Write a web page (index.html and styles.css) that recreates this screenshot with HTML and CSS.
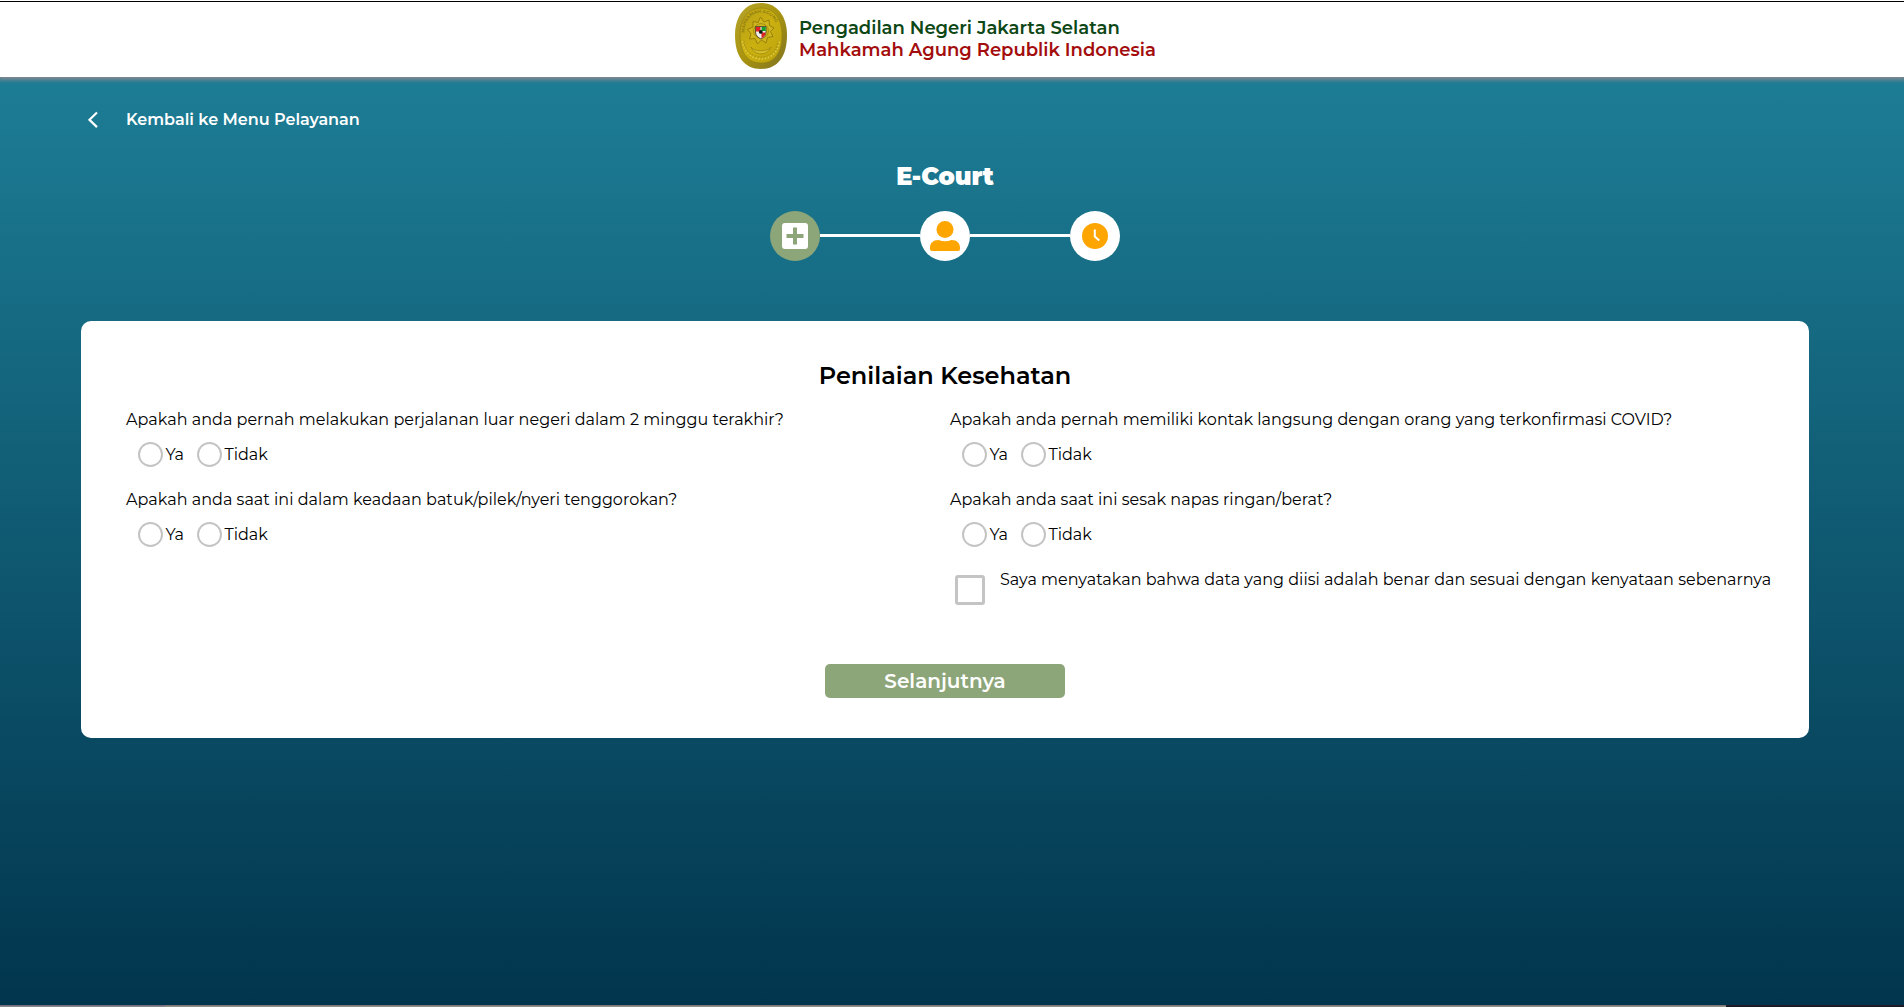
FILE: index.html
```
<!DOCTYPE html>
<html lang="id">
<head>
<meta charset="utf-8">
<title>E-Court</title>
<link rel="stylesheet" href="styles.css">
</head>
<body>
<header class="header">
  <div class="brand">
    <svg class="seal" viewBox="0 0 52 66" aria-hidden="true">
      <defs>
        <linearGradient id="rim" x1="0" y1="0" x2="1" y2="1"><stop offset="0" stop-color="#b8a52c"/><stop offset=".5" stop-color="#a8940f"/><stop offset="1" stop-color="#7f7223"/></linearGradient>
        <linearGradient id="face" x1="0" y1="0" x2="1" y2="1"><stop offset="0" stop-color="#b79f16"/><stop offset=".5" stop-color="#cbb010"/><stop offset="1" stop-color="#bba30e"/></linearGradient>
        <path id="arc" d="M9.500 30C9 3 43 3 42.500 30"/>
      </defs>
      <path d="M26 0C42 0 52 13 52 32C52 53 43 66 26 66C9 66 0 53 0 32C0 13 10 0 26 0Z" fill="url(#rim)"/>
      <path d="M26 5C39 5 47 16 47 32C47 49 40 60 26 60C12 60 5 49 5 32C5 16 13 5 26 5Z" fill="url(#face)" stroke="#978412" stroke-width=".7"/>
      <text class="seal-text"><textPath href="#arc" textLength="48">MAHKAMAH AGUNG</textPath></text>
      <path d="M25.500 14L29 19L34 17L34.500 22.500L39 25L35.500 28.500L38 33.500L32.500 34.500L31 40L26.500 37L22.500 41L20 35.500L14.500 36L16 30.500L12.500 26.500L18 24L18 18.500L23 19.500Z" fill="#d0b51b" stroke="#907c0d" stroke-width=".9"/>
      <circle cx="26" cy="28" r="7.400" fill="#d0b51b" stroke="#927f14" stroke-width=".7"/>
      <path d="M20.500 23.500H31V29C31 32.500 28.500 34.500 26 36C23 34.500 20.500 32.500 20.500 29Z" fill="#f0f0e8" stroke="#40381c" stroke-width=".8"/>
      <path d="M21 24H25.500V28.500H21Z" fill="#e22328"/><path d="M26.500 24H30.700V28H26.500Z" fill="#13a02b"/><path d="M26.500 29.500H30.600C30.500 32.500 28.500 34 26.500 35.200Z" fill="#df2027"/>
      <circle cx="25.800" cy="28.900" r="1.900" fill="#131b16"/>
      <path d="M7.500 38C10 62 42 62 44.500 38" fill="none" stroke="#e0cc4a" stroke-width="1.500" stroke-dasharray="1.500 1.700"/>
      <path d="M8.800 38C11.500 59.500 40.500 59.500 43.200 38" fill="none" stroke="#988512" stroke-width=".8" stroke-dasharray="1.500 1.700"/>
      <path d="M16 44C19 53 33 53 36 44C34 49 18 49 16 44Z" fill="#d8c02b" stroke="#907c0f" stroke-width=".6"/>
    </svg>
    <div class="brand-text">
      <div class="court">Pengadilan Negeri Jakarta Selatan</div>
      <div class="supreme">Mahkamah Agung Republik Indonesia</div>
    </div>
  </div>
</header>
<main class="page">
  <a class="back">
    <svg class="back-icon" viewBox="0 0 10 18" aria-hidden="true"><path d="M9 1.500L1.500 8.800L9 16.100" fill="none" stroke="#fff" stroke-width="2.200"/></svg>
    <span>Kembali ke Menu Pelayanan</span>
  </a>
  <h1 class="title">E-Court</h1>
  <div class="steps">
    <div class="step step-active"><svg width="26" height="26" viewBox="0 0 26 26"><rect width="26" height="26" rx="3" fill="#fff"/><path d="M11 4.500h4V11h6.500v4H15v6.500h-4V15H4.500v-4H11Z" fill="#8ca579"/></svg></div>
    <div class="line"></div>
    <div class="step"><svg width="30" height="30" viewBox="0 0 30 30" fill="#ffa500"><circle cx="15" cy="8.500" r="8.500"/><path d="M8.500 19Q15 21.500 21.500 19C27 19 30 22.500 30 26.500V28Q30 30 28 30H2Q0 30 0 28V26.500C0 22.500 3 19 8.500 19Z"/></svg></div>
    <div class="line"></div>
    <div class="step"><svg width="26" height="26" viewBox="0 0 26 26"><circle cx="13" cy="13" r="13" fill="#ffa500"/><path d="M12.800 6.500V13.500L17.300 17.500" fill="none" stroke="#fff" stroke-width="2"/></svg></div>
  </div>
  <section class="card">
    <h2 class="card-title">Penilaian Kesehatan</h2>
    <div class="columns">
      <div class="column">
        <div class="question"><p class="q">Apakah anda pernah melakukan perjalanan luar negeri dalam 2 minggu terakhir?</p>
          <div class="options"><label class="option"><i class="radio"></i><span class="yes">Ya</span></label><label class="option"><i class="radio"></i><span>Tidak</span></label></div></div>
        <div class="question"><p class="q">Apakah anda saat ini dalam keadaan batuk/pilek/nyeri tenggorokan?</p>
          <div class="options"><label class="option"><i class="radio"></i><span class="yes">Ya</span></label><label class="option"><i class="radio"></i><span>Tidak</span></label></div></div>
      </div>
      <div class="column">
        <div class="question"><p class="q">Apakah anda pernah memiliki kontak langsung dengan orang yang terkonfirmasi COVID?</p>
          <div class="options"><label class="option"><i class="radio"></i><span class="yes">Ya</span></label><label class="option"><i class="radio"></i><span>Tidak</span></label></div></div>
        <div class="question"><p class="q">Apakah anda saat ini sesak napas ringan/berat?</p>
          <div class="options"><label class="option"><i class="radio"></i><span class="yes">Ya</span></label><label class="option"><i class="radio"></i><span>Tidak</span></label></div></div>
        <label class="consent"><i class="checkbox"></i><span class="q">Saya menyatakan bahwa data yang diisi adalah benar dan sesuai dengan kenyataan sebenarnya</span></label>
      </div>
    </div>
    <button class="next">Selanjutnya</button>
  </section>
</main>
<footer class="edge"><div class="edge-left"></div><div class="edge-mid"></div><div class="edge-right"></div></footer>
</body>
</html>
```
FILE: styles.css
```
* { box-sizing: border-box; }
body {
  margin: 0;
  height: 1007px;
  overflow: hidden;
  display: flex;
  flex-direction: column;
  font: 400 16px/24px Montserrat, Inter, sans-serif;
  color: #000;
  background: linear-gradient(#1d7e96 65px, #01354d 1007px);
}
h1, h2, p { margin: 0; }
.header {
  flex: none;
  height: 77px;
  padding-right: 13px;
  display: flex;
  align-items: center;
  justify-content: center;
  background: linear-gradient(transparent 1px, #000 1px, #000 2px, transparent 2px), #fff;
  box-shadow: 0 1px 4px 2px #808890;
}
.brand { display: flex; align-items: center; gap: 12px; }
.seal { width: 52px; height: 66px; margin-top: -5px; display: block; }
.seal-text { font: 600 4.500px Montserrat, Inter, sans-serif; fill: #8c7910; }
.brand-text { font-size: 18px; line-height: 22px; font-weight: 600; white-space: nowrap; width: 357px; }
.court { color: #0d4716; }
.supreme { color: #a30d0d; }
.page {
  flex: 1;
  width: 1890px;
  padding: 31px 81px 0;
  display: flex;
  flex-direction: column;
}
.back { display: flex; align-items: center; gap: 28px; height: 24px; padding-left: 7px; color: #fff; font-weight: 600; }
.back-icon { width: 10px; height: 18px; }
.title { margin-top: 27px; color: #fff; text-align: center; font-size: 24px; line-height: 36px; font-weight: 900; }
.steps { display: flex; align-items: center; justify-content: center; margin-top: 16px; }
.step { width: 50px; height: 50px; border-radius: 50%; background: #fff; display: flex; align-items: center; justify-content: center; }
.step-active { background: #8ca579; }
.line { width: 100px; height: 3px; margin-top: -1px; background: #fff; }
.card { height: 417px; margin-top: 60px; padding: 37px 0 40px 45px; border-radius: 10px; background: #fff; display: flex; flex-direction: column; }
.card-title { margin-left: -45px; text-align: center; font-size: 24px; line-height: 36px; font-weight: 600; }
.columns { display: grid; grid-template-columns: 824px 1fr; margin-top: 14px; }
.question { height: 80px; }
.q { white-space: nowrap; letter-spacing: .022px; }
.options { display: flex; gap: 13px; margin: 10px 0 0 12px; }
.option { display: flex; gap: 2.500px; line-height: 25px; }
.radio { width: 25px; height: 25px; border: 2px solid #c4c4c4; border-radius: 50%; }
.yes { width: 18.500px; }
.consent { display: flex; gap: 15px; padding-left: 5px; }
.checkbox { width: 30px; height: 30px; margin-top: 7px; border: 3px solid #c4c4c4; border-radius: 3px; }
.next { align-self: center; width: 240px; height: 34px; margin: auto 45px 0 0; padding: 0; border: 0; border-radius: 5px; background: #8ca579; color: #fff; font: 600 20px/34px Montserrat, Inter, sans-serif; }
.edge { flex: none; height: 2px; display: flex; }
.edge-left { width: 165px; background: linear-gradient(#685f72, #969299); }
.edge-mid { width: 1561px; background: linear-gradient(#746b6b, #a19a92); }
.edge-right { flex: 1; background: linear-gradient(#271b2d, #17172a); }
```
